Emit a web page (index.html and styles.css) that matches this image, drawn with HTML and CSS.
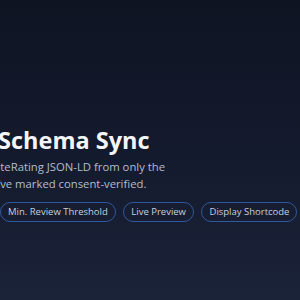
FILE: index.html
```html
<!DOCTYPE html>
<html lang="en">
<head>
    <meta charset="UTF-8">
    <meta name="viewport" content="width=device-width, initial-scale=1.0">
    <title>Review Schema Sync</title>
    <link rel="stylesheet" href="styles.css">
</head>
<body>
    <div class="hero">
        <!-- Titular y descripción -->
        <h1 class="hero-title">Review Schema Sync</h1>
        <p class="hero-text">Get AggregateRating JSON-LD from only the reviews you’ve marked consent-verified.</p>

        <!-- Etiquetas de funciones -->
        <div class="chips">
            <span class="chip">Min. Review Threshold</span>
            <span class="chip">Live Preview</span>
            <span class="chip">Display Shortcode</span>
        </div>
    </div>
</body>
</html>
```

FILE: styles.css
```css
html, body {
    height: 100%;
}
body {
    font-family: "Open Sans", Arial, sans-serif;
    margin: 0;
    padding: 0;
    overflow: hidden;
    background: linear-gradient(180deg, #0f1423 0%, #141a2d 50%, #1b2339 100%);
}
.hero {
    padding-top: 126px;
}
.hero-title {
    margin: 0 0 5px -92px;
    font-size: 23.5px;
    line-height: 28px;
    font-weight: 700;
    color: #f3f5f9;
    white-space: nowrap;
}
.hero-text {
    margin: 0 0 0 -64px;
    max-width: 250px;
    font-size: 11.3px;
    line-height: 16.5px;
    color: #b3bccd;
}
.chips {
    display: flex;
    gap: 7.5px;
    margin-top: 10px;
}
.chip {
    padding: 2px 7px;
    border: 1.5px solid #30589c;
    border-radius: 999px;
    font-size: 9.5px;
    line-height: 13.5px;
    color: #c6cedd;
    white-space: nowrap;
}
```
